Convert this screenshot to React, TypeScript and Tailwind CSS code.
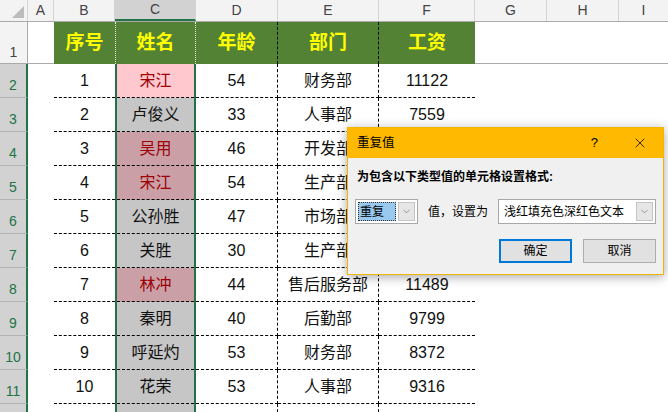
import { ChevronDown, X } from "lucide-react";

const cols = ["A", "B", "C", "D", "E", "F", "G", "H", "I"];
const widths = ["w-[26px]", "w-[61px]", "w-[81px]", "w-[82px]", "w-[101px]", "w-[96px]", "w-[72px]", "w-[72px]", "w-[50px]"];

type Row = { no: string; name: string; age: string; dept: string; pay: string; dup?: boolean; active?: boolean };

// pay of rows 3-6 is under the dialog
const rows: Row[] = [
  { no: "1", name: "宋江", age: "54", dept: "财务部", pay: "11122", dup: true, active: true },
  { no: "2", name: "卢俊义", age: "33", dept: "人事部", pay: "7559" },
  { no: "3", name: "吴用", age: "46", dept: "开发部", pay: "", dup: true },
  { no: "4", name: "宋江", age: "54", dept: "生产部", pay: "", dup: true },
  { no: "5", name: "公孙胜", age: "47", dept: "市场部", pay: "" },
  { no: "6", name: "关胜", age: "30", dept: "生产部", pay: "" },
  { no: "7", name: "林冲", age: "44", dept: "售后服务部", pay: "11489", dup: true },
  { no: "8", name: "秦明", age: "40", dept: "后勤部", pay: "9799" },
  { no: "9", name: "呼延灼", age: "53", dept: "财务部", pay: "8372" },
  { no: "10", name: "花荣", age: "53", dept: "人事部", pay: "9316" },
  { no: "", name: "", age: "", dept: "", pay: "" },
];

const dash = "border-b border-dashed border-black";

function DataRow({ r, idx }: { r: Row; idx: number }) {
  const nameBg = r.active ? "bg-[#ffc7ce]" : r.dup ? "bg-[#caa0a6]" : "bg-[#c6c6c6]";
  return (
    <div className="flex h-[34px] shrink-0">
      <div className="flex w-[28px] shrink-0 items-end justify-center border-b border-r-2 border-b-[#b4b4b4] border-r-[#217346] bg-[#d2d2d2] pb-[1px] text-[14px] text-[#217346]">
        {r.no === "" ? "" : idx + 2}
      </div>
      <div className={`${widths[0]} shrink-0 bg-white`} />
      <div className={`${widths[1]} ${dash} flex shrink-0 items-center justify-center`}>{r.no}</div>
      <div className={`${widths[2]} shrink-0 border-x-2 border-solid border-x-[#217346] ${nameBg}`}>
        <div className={`${dash} flex h-full items-center justify-center ${r.name && r.dup ? "text-[#9c0006]" : ""}`}>{r.name}</div>
      </div>
      <div className={`${widths[3]} ${dash} flex shrink-0 items-center justify-center border-r border-r-black`}>{r.age}</div>
      <div className={`${widths[4]} ${dash} flex shrink-0 items-center justify-center overflow-hidden whitespace-nowrap border-r border-r-black`}>
        {r.dept}
      </div>
      <div className={`${widths[5]} ${dash} flex shrink-0 items-center justify-center`}>{r.pay}</div>
      <div className="flex-1 bg-white" />
    </div>
  );
}

function Combo({ text, width, selected }: { text: string; width: string; selected?: boolean }) {
  return (
    <div className={`flex h-[25px] ${width} items-center border border-[#a8a8a8] bg-white p-[2px]`}>
      <div className="flex h-full flex-1 items-center">
        {selected ? (
          <span className="mr-[2px] flex h-full flex-1 items-center border border-dotted border-[#333] bg-[#99c9ef] pl-[1px]">{text}</span>
        ) : (
          <span className="pl-[3px]">{text}</span>
        )}
      </div>
      <div className="flex h-full w-[17px] items-center justify-center border border-[#c4c4c4] bg-[#e6e6e6]">
        <ChevronDown size={11} strokeWidth={1.2} className="text-[#555]" />
      </div>
    </div>
  );
}

function Dialog() {
  return (
    <div className="absolute left-[347px] top-[127px] flex h-[148px] w-[317px] flex-col border border-[#f2b600] bg-[#f0f0f0] text-[12px] text-black shadow-[0_2px_10px_rgba(0,0,0,0.35)]">
      <div className="flex h-[30px] shrink-0 items-center bg-[#ffb900] pl-[9px]">
        <span className="text-[12.5px]">重复值</span>
        <span className="ml-auto mr-[34px] text-[13px]">?</span>
        <X size={16} strokeWidth={1.2} className="mr-[15px]" />
      </div>
      <div className="pl-[9px] pt-[10px] font-bold">为包含以下类型值的单元格设置格式:</div>
      <div className="mt-[13px] flex items-center pl-[7px]">
        <Combo text="重复" width="w-[63px]" selected />
        <span className="ml-[10px] w-[70px]">值，设置为</span>
        <Combo text="浅红填充色深红色文本" width="w-[158px]" />
      </div>
      <div className="mt-[15px] flex gap-[11px] pl-[151px]">
        <div className="flex h-[24px] w-[73px] items-center justify-center border-2 border-[#0078d7] bg-[#e1e1e1]">确定</div>
        <div className="flex h-[24px] w-[73px] items-center justify-center border border-[#adadad] bg-[#e1e1e1]">取消</div>
      </div>
    </div>
  );
}

export default function App() {
  return (
    <div className="relative h-[412px] w-[668px] overflow-hidden bg-white font-['Liberation_Sans','Noto_Sans_CJK_SC',sans-serif] text-[16px] text-[#111]">
      {/* column letters */}
      <div className="flex h-[22px] border-b border-[#ababab] bg-[#f3f3f3] text-[14px] text-[#444]">
        <div className="relative w-[28px] shrink-0 border-r border-[#d5d5d5]">
          <div className="absolute bottom-[3px] right-[3px] h-0 w-0 border-b-[12px] border-l-[12px] border-b-[#bcbcbc] border-l-transparent" />
        </div>
        {cols.map((c, i) => (
          <div
            key={c}
            className={`${widths[i]} flex shrink-0 items-center justify-center border-r border-[#d5d5d5] ${c === "C" ? "border-b-2 border-b-[#217346] bg-[#d2d2d2]" : ""}`}
          >
            {c}
          </div>
        ))}
      </div>

      {/* row 1 */}
      <div className="flex h-[42px]">
        <div className="flex w-[28px] shrink-0 items-end justify-center border-b border-r border-[#ababab] bg-[#f3f3f3] text-[14px] text-[#444]">
          1
        </div>
        <div className={`${widths[0]} shrink-0 border-b border-[#ababab]`} />
        {["序号", "姓名", "年龄", "部门", "工资"].map((h, i) => (
          <div
            key={h}
            className={`${widths[i + 1]} flex shrink-0 items-center justify-center bg-[#548235] text-[19px] font-bold text-[#ffff00] ${
              i === 1 ? "border-x border-dotted border-x-[#e8e8e8]" : ""
            } ${i === 2 || i === 3 ? "border-r border-dashed border-r-black" : ""}`}
          >
            {h}
          </div>
        ))}
        <div className="flex-1 border-b border-[#ababab]" />
      </div>

      {rows.map((r, i) => (
        <DataRow key={i} r={r} idx={i} />
      ))}

      <Dialog />
    </div>
  );
}
